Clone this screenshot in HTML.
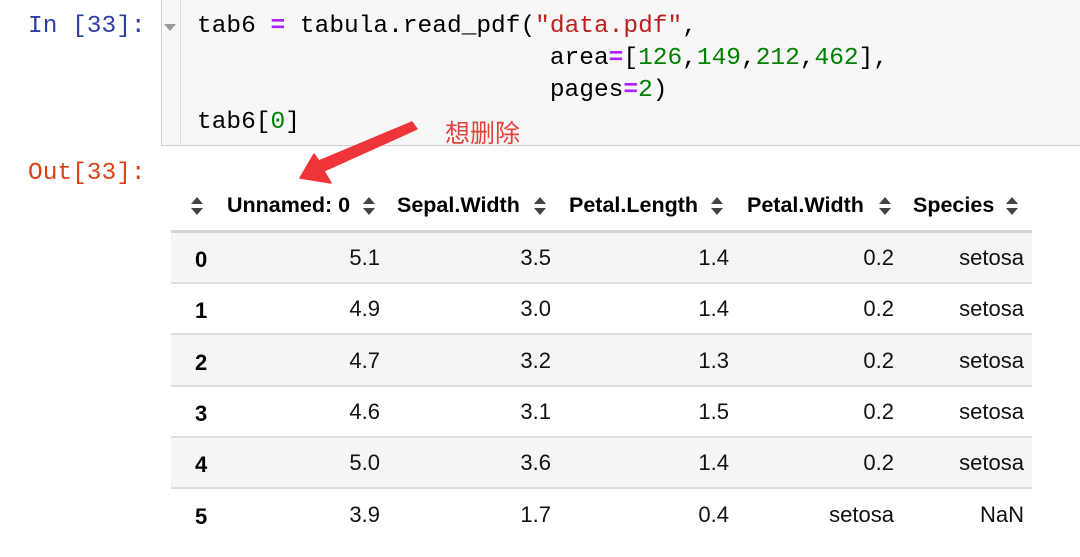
<!DOCTYPE html>
<html><head><meta charset="utf-8"><style>
body{margin:0;width:1080px;height:557px;background:#fff;position:relative;overflow:hidden;font-family:"Liberation Sans",Arial,sans-serif}
.mono{font-family:"Liberation Mono",monospace;font-size:24.5px;position:absolute;white-space:pre;line-height:32px}
.cell{position:absolute;left:161px;top:-2px;width:930px;height:146px;background:#f7f7f7;border:1px solid #cfcfcf}
.gut{position:absolute;left:180px;top:0;width:1px;height:145px;background:#ddd}
.p{color:#aa22ff;font-weight:bold}.s{color:#ba2121}.n{color:#008000}
.t{position:absolute;font-size:22px;white-space:nowrap;color:#111}
.b{font-weight:bold;color:#000}
.row{position:absolute;left:171px;width:861px}
</style></head><body>
<div class="mono" style="left:28px;top:11px;color:#303f9f">In [33]:</div>
<div class="cell"></div>
<div class="gut"></div>
<div style="position:absolute;left:164px;top:24px;width:0;height:0;border-left:6px solid transparent;border-right:6px solid transparent;border-top:7px solid #999"></div>
<div class="mono" style="left:197px;top:11px">tab6 <span class="p">=</span> tabula.read_pdf(<span class="s">"data.pdf"</span>,
                        area<span class="p">=</span>[<span class="n">126</span>,<span class="n">149</span>,<span class="n">212</span>,<span class="n">462</span>],
                        pages<span class="p">=</span><span class="n">2</span>)
tab6[<span class="n">0</span>]</div>
<div class="mono" style="left:28px;top:158px;color:#d84315">Out[33]:</div>
<div style="position:absolute;left:445px;top:114px;color:#e8403f;font-size:25px;font-family:'Noto Sans CJK SC',sans-serif">想删除</div>
<svg style="position:absolute;left:0;top:0" width="1080" height="557">
<polygon points="300,178 314,154 319,161 412,122 417,129 324,171 331,183" fill="#f0353a" stroke="#f0353a" stroke-width="1.5" stroke-linejoin="round"/>
</svg>
<div class="row" style="top:230px;height:3px;background:#d6d6d6"></div>
<div class="row" style="top:233px;height:49px;background:#f5f5f5"></div>
<div class="row" style="top:282px;height:1.5px;background:#ddd"></div>
<div class="row" style="top:333px;height:1.5px;background:#ddd"></div>
<div class="row" style="top:335px;height:50px;background:#f5f5f5"></div>
<div class="row" style="top:385px;height:1.5px;background:#ddd"></div>
<div class="row" style="top:436px;height:1.5px;background:#ddd"></div>
<div class="row" style="top:438px;height:49px;background:#f5f5f5"></div>
<div class="row" style="top:487px;height:1.5px;background:#ddd"></div>
<svg style="position:absolute;left:0;top:0" width="1080" height="557">
<g fill="#444">
<path d="M191 204h12l-6-7z M191 208h12l-6 7z"/>
<path d="M363 204h12l-6-7z M363 208h12l-6 7z"/>
<path d="M534 204h12l-6-7z M534 208h12l-6 7z"/>
<path d="M711 204h12l-6-7z M711 208h12l-6 7z"/>
<path d="M879 204h12l-6-7z M879 208h12l-6 7z"/>
<path d="M1006 204h12l-6-7z M1006 208h12l-6 7z"/>
</g></svg>
<div class="t b" style="left:227px;top:193px;font-size:21.5px">Unnamed: 0</div>
<div class="t b" style="left:397px;top:193px;font-size:21.5px">Sepal.Width</div>
<div class="t b" style="left:569px;top:193px;font-size:21.5px">Petal.Length</div>
<div class="t b" style="left:747px;top:193px;font-size:21.5px">Petal.Width</div>
<div class="t b" style="left:913px;top:193px;font-size:21.5px">Species</div>
<div id="rows"></div>
<script>
var d=[["0","5.1","3.5","1.4","0.2","setosa"],["1","4.9","3.0","1.4","0.2","setosa"],["2","4.7","3.2","1.3","0.2","setosa"],["3","4.6","3.1","1.5","0.2","setosa"],["4","5.0","3.6","1.4","0.2","setosa"],["5","3.9","1.7","0.4","setosa","NaN"]];
var r=[380,551,729,894,1024],h="";
d.forEach(function(row,i){var y=245+i*51.3;
h+='<div class="t b" style="left:195px;top:'+(y+2)+'px">'+row[0]+'</div>';
for(var j=1;j<6;j++)h+='<div class="t" style="right:'+(1080-r[j-1])+'px;top:'+(y)+'px">'+row[j]+'</div>';});
document.getElementById("rows").innerHTML=h;
</script>
</body></html>
